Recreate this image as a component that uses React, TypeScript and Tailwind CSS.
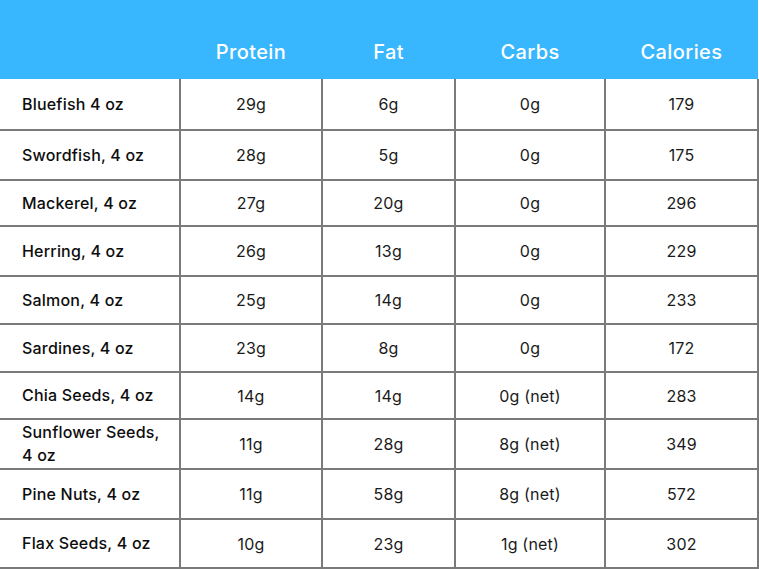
const rows: [string, string, string, string, string][] = [
  ["Bluefish 4 oz", "29g", "6g", "0g", "179"],
  ["Swordfish, 4 oz", "28g", "5g", "0g", "175"],
  ["Mackerel, 4 oz", "27g", "20g", "0g", "296"],
  ["Herring, 4 oz", "26g", "13g", "0g", "229"],
  ["Salmon, 4 oz", "25g", "14g", "0g", "233"],
  ["Sardines, 4 oz", "23g", "8g", "0g", "172"],
  ["Chia Seeds, 4 oz", "14g", "14g", "0g (net)", "283"],
  ["Sunflower Seeds,\n4 oz", "11g", "28g", "8g (net)", "349"],
  ["Pine Nuts, 4 oz", "11g", "58g", "8g (net)", "572"],
  ["Flax Seeds, 4 oz", "10g", "23g", "1g (net)", "302"],
];

const heights = ["h-[51px]", "h-[50px]", "h-[46px]", "h-[50px]", "h-[48px]", "h-[48px]", "h-[47px]", "h-[50px]", "h-[50px]", "h-[49px]"];

export default function App() {
  return (
    <div className="w-[759px] h-[569px] bg-white overflow-hidden font-['Inter',sans-serif]">
      <table className="w-[758px] border-collapse table-fixed">
        <colgroup>
          <col className="w-[180px]" />
          <col className="w-[142px]" />
          <col className="w-[133px]" />
          <col className="w-[150px]" />
          <col className="w-[153px]" />
        </colgroup>
        <thead>
          <tr className="h-[79px] bg-[#38b6fe] text-white text-[20px] tracking-[0.4px]">
            <th className="pt-[24px]"></th>
            <th className="pt-[24px] font-medium">Protein</th>
            <th className="pt-[24px] font-medium">Fat</th>
            <th className="pt-[24px] font-medium">Carbs</th>
            <th className="pt-[24px] font-medium">Calories</th>
          </tr>
        </thead>
        <tbody className="text-[16px] text-[#1a1a1a] tracking-[0.2px]">
          {rows.map((r, i) => (
            <tr key={r[0]} className={`${heights[i]} border-b-2 border-[#7a7a7a]`}>
              <td className="pl-[22px] pr-2 font-medium leading-[23px] text-[#0d0d0d] whitespace-pre-line">{r[0]}</td>
              {r.slice(1).map((v, j) => (
                <td key={j} className="text-center border-l-2 border-[#7a7a7a] last:border-r-2">
                  {v}
                </td>
              ))}
            </tr>
          ))}
        </tbody>
      </table>
    </div>
  );
}
